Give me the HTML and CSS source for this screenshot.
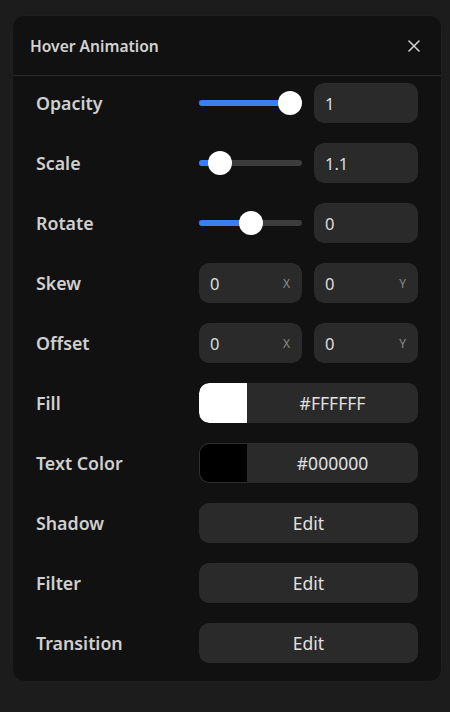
FILE: index.html
```html
<!DOCTYPE html>
<html>
<head>
<meta charset="utf-8">
<link rel="stylesheet" href="styles.css">
</head>
<body>
<div class="panel">
  <div class="header">
    <span class="title">Hover Animation</span>
    <svg class="close" width="12" height="12" viewBox="0 0 12 12"><path d="M1 1L11 11M11 1L1 11" stroke="#cfcfcf" stroke-width="1.6" stroke-linecap="round"/></svg>
  </div>
  <div class="body">
    <div class="row">
      <span class="label">Opacity</span>
      <div class="pair">
        <div class="slider"><div class="track"><div class="fill" style="width:88%"></div><div class="thumb" style="left:88%"></div></div></div>
        <div class="input">1</div>
      </div>
    </div>
    <div class="row">
      <span class="label">Scale</span>
      <div class="pair">
        <div class="slider"><div class="track"><div class="fill" style="width:20%"></div><div class="thumb" style="left:20%"></div></div></div>
        <div class="input">1.1</div>
      </div>
    </div>
    <div class="row">
      <span class="label">Rotate</span>
      <div class="pair">
        <div class="slider"><div class="track"><div class="fill" style="width:50%"></div><div class="thumb" style="left:50%"></div></div></div>
        <div class="input">0</div>
      </div>
    </div>
    <div class="row">
      <span class="label">Skew</span>
      <div class="pair">
        <div class="input"><span>0</span><span class="axis">X</span></div>
        <div class="input"><span>0</span><span class="axis">Y</span></div>
      </div>
    </div>
    <div class="row">
      <span class="label">Offset</span>
      <div class="pair">
        <div class="input"><span>0</span><span class="axis">X</span></div>
        <div class="input"><span>0</span><span class="axis">Y</span></div>
      </div>
    </div>
    <div class="row">
      <span class="label">Fill</span>
      <div class="color"><span class="swatch white"></span><span class="hex">#FFFFFF</span></div>
    </div>
    <div class="row">
      <span class="label">Text Color</span>
      <div class="color"><span class="swatch black"></span><span class="hex">#000000</span></div>
    </div>
    <div class="row">
      <span class="label">Shadow</span>
      <div class="button">Edit</div>
    </div>
    <div class="row">
      <span class="label">Filter</span>
      <div class="button">Edit</div>
    </div>
    <div class="row">
      <span class="label">Transition</span>
      <div class="button">Edit</div>
    </div>
  </div>
</div>
</body>
</html>
```

FILE: styles.css
```css
html, body {
  margin: 0;
  padding: 0;
  background: #1c1c1c;
  width: 450px;
  height: 712px;
  overflow: hidden;
  font-family: "Noto Sans", "DejaVu Sans", sans-serif;
}
.panel {
  margin: 15px 0 0 12px;
  width: 430px;
  height: 667px;
  box-sizing: border-box;
  background: #111111;
  border: 1px solid #1f1f1f;
  border-radius: 12px;
}
.header {
  height: 59px;
  border-bottom: 1px solid #2a2a2a;
  display: flex;
  align-items: center;
  justify-content: space-between;
  padding: 0 21px 0 17px;
}
.title {
  color: #d2d2d2;
  font-size: 15.6px;
  font-weight: 600;
}
.close { display: block; }
.body {
  padding: 7px 23px 0 23px;
  display: flex;
  flex-direction: column;
  gap: 20px;
}
.row {
  height: 40px;
  display: flex;
  align-items: center;
  justify-content: space-between;
}
.label {
  color: #cfcfcf;
  font-size: 17.8px;
  font-weight: 600;
}
.pair {
  width: 219px;
  display: grid;
  grid-template-columns: 103px 104px;
  gap: 12px;
  height: 40px;
}
.slider {
  display: flex;
  align-items: center;
}
.track {
  position: relative;
  width: 100%;
  height: 6px;
  border-radius: 3px;
  background: #3c3c3c;
}
.fill {
  height: 100%;
  border-radius: 3px;
  background: #3a7ff2;
}
.thumb {
  position: absolute;
  top: 50%;
  width: 24px;
  height: 24px;
  margin: -12px 0 0 -12px;
  border-radius: 50%;
  background: #ffffff;
}
.input {
  background: #2a2a2a;
  border-radius: 10px;
  display: flex;
  align-items: center;
  justify-content: space-between;
  padding: 0 12px 0 11px;
  color: #dedede;
  font-size: 16.5px;
}
.axis {
  color: #8a8a8a;
  font-size: 12px;
}
.color, .button {
  width: 219px;
  height: 40px;
  background: #2a2a2a;
  border-radius: 10px;
  display: flex;
  align-items: center;
  overflow: hidden;
  color: #e0e0e0;
  font-size: 17.5px;
}
.swatch {
  width: 48px;
  height: 40px;
  box-sizing: border-box;
  border-radius: 10px 0 0 10px;
}
.swatch.white { background: #ffffff; }
.swatch.black { background: #000000; border: 1px solid #2e2e2e; border-right: none; }
.hex {
  flex: 1;
  text-align: center;
}
.button {
  justify-content: center;
}
```
